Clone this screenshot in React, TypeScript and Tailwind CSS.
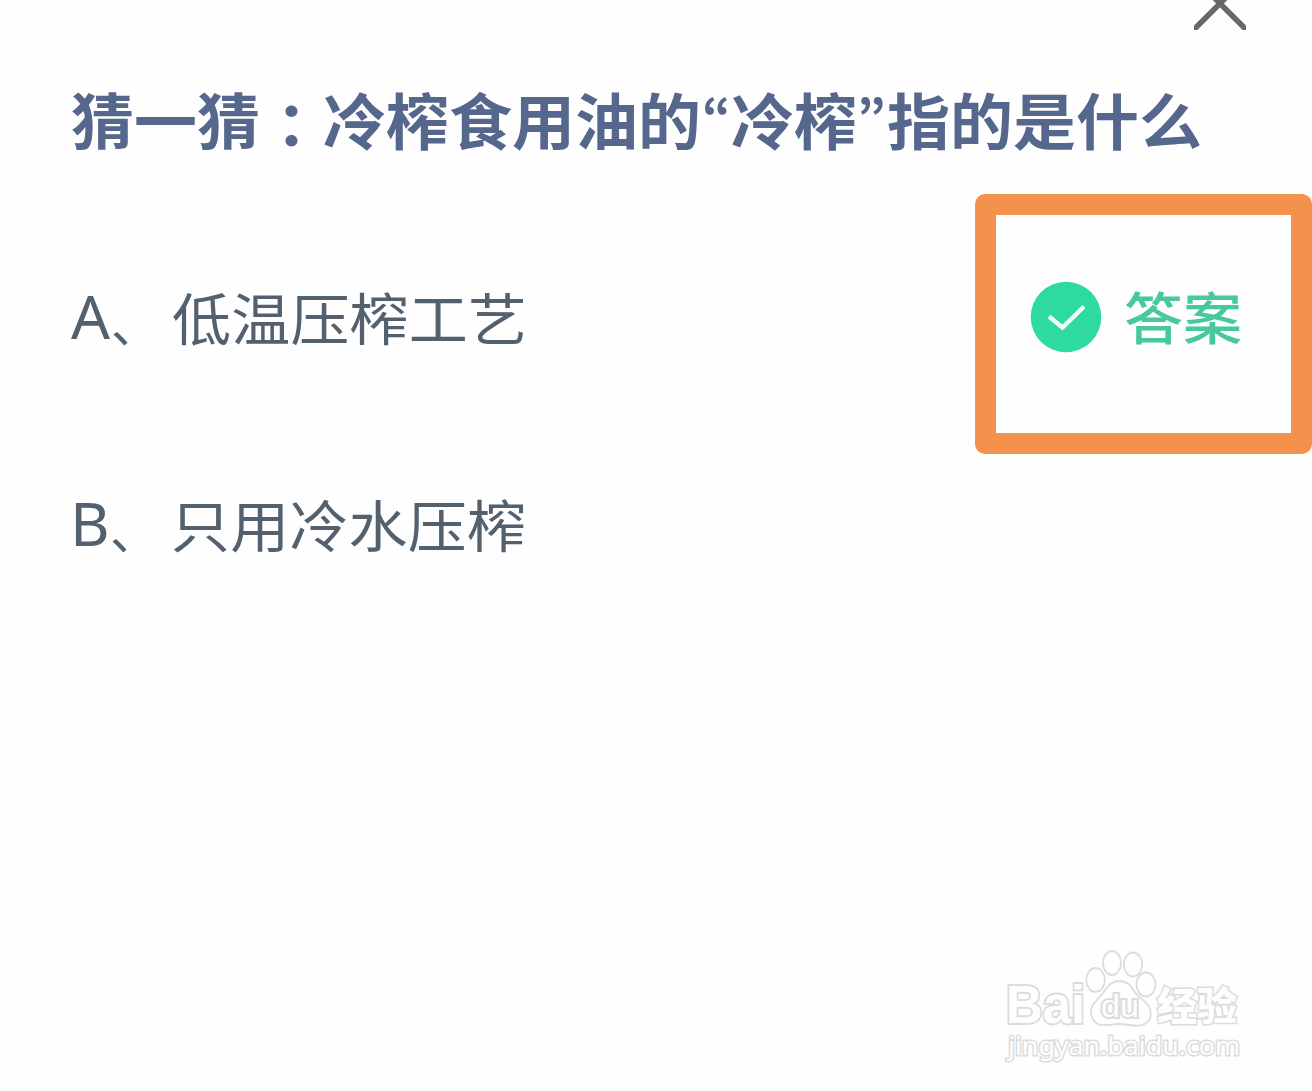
import React from "react";

const options = [
  { key: "A", text: "低温压榨工艺" },
  { key: "B", text: "只用冷水压榨" },
];

const Option = ({ letter, text }: { letter: string; text: string }) => (
  <div className="flex whitespace-nowrap font-['Noto_Sans_CJK_SC',sans-serif] text-[59px] leading-[80px] text-[#53616f]">
    <span className="mt-[1px] w-[39px] font-['Noto_Sans',sans-serif] text-[61px] leading-[80px]">{letter}</span>
    <span className="w-[62px] pl-[1px] text-[48px] leading-[92px]">、</span>
    <span className="h-[92px] scale-y-95 leading-[81px] tracking-[0.200px]">{text}</span>
  </div>
);

const CloseIcon = () => (
  <svg width="52" height="30" viewBox="0 0 52 30" fill="none" stroke="#686868" strokeWidth="5.500">
    <path d="M-1.500 31L54 -24.500M53.500 31L-2 -24.500" />
  </svg>
);

const CheckIcon = () => (
  <svg width="72" height="72" viewBox="0 0 72 72" fill="none">
    <circle cx="36" cy="36" r="35.300" fill="#2cdb9d" />
    <path d="M19 35.500L32.500 46.500L54 25.500" stroke="#effff8" strokeWidth="4.400" />
  </svg>
);

const Watermark = () => (
  <svg width="250" height="120" viewBox="0 0 250 120" fill="#fefefe" stroke="#dcdcdc" strokeWidth="1.800">
    <text x="6" y="72.500" textLength="79" lengthAdjust="spacingAndGlyphs" className="font-['Liberation_Sans',sans-serif] text-[53px] font-bold" paintOrder="stroke" strokeWidth="3.800">Bai</text>
    <ellipse cx="95.500" cy="30" rx="9.300" ry="12" />
    <ellipse cx="112" cy="13" rx="9" ry="12" />
    <ellipse cx="133" cy="14.500" rx="9.300" ry="12" />
    <ellipse cx="146" cy="34.500" rx="9.500" ry="12" />
    <path d="M120 31C111 31 107 37 103 43C99 49 90 54 91 63C92 72 98 76 105 75C112 75 115 74 120 74C126 74 134 77 142 75C149 73 152 67 150 59C148 51 139 49 134 41C130 35 127 31 120 31Z" />
    <text x="101" y="67" textLength="38" lengthAdjust="spacingAndGlyphs" className="font-['Liberation_Sans',sans-serif] text-[32px]" strokeWidth="4" paintOrder="stroke">du</text>
    <text x="157" y="70" textLength="80" lengthAdjust="spacingAndGlyphs" className="font-['Noto_Sans_CJK_SC',sans-serif] text-[39px] font-black" paintOrder="stroke" strokeWidth="3">经验</text>
    <text x="8" y="104.500" textLength="232" lengthAdjust="spacingAndGlyphs" className="font-['Noto_Sans',sans-serif] text-[26px]" paintOrder="stroke" strokeWidth="3">jingyan.baidu.com</text>
  </svg>
);

const App = () => {
  return (
    <div className="flex h-[1091px] w-[1312px] flex-col overflow-hidden bg-[#fefefe]">
      <header className="flex h-[30px] justify-end pr-[66px]">
        <CloseIcon />
      </header>

      <h1 className="mt-[45px] flex h-[88px] scale-y-[0.970] whitespace-nowrap pl-[71px] font-['Noto_Sans_CJK_SC',sans-serif] text-[63px] font-bold leading-[88px] text-[#56678d]">
        <span>猜一猜</span>
        <span className="mt-[4px] font-['Noto_Sans_CJK_TC',sans-serif]">：</span>
        <span>冷榨食用油的</span>
        <span className="mt-[-5px] w-[30px] pl-[1px] font-['Noto_Sans_CJK_KR',sans-serif] text-[50px]" lang="ko">“</span>
        <span>冷榨</span>
        <span className="mt-[-5px] w-[30px] font-['Noto_Sans_CJK_KR',sans-serif] text-[50px]" lang="ko">”</span>
        <span>指的是什么</span>
      </h1>

      <main className="mt-[31px]">
        <div className="flex h-[260px] justify-between pl-[71px]">
          <div className="pt-[81px]">
            <Option letter={options[0].key} text={options[0].text} />
          </div>
          <div className="flex w-[337px] rounded-[10px] bg-[#f2924c] p-[21px]">
            <div className="flex flex-1 bg-[#fefefe] pl-[34px]">
              <div className="mt-[66px] h-[72px]">
                <CheckIcon />
              </div>
              <span className="ml-[22px] mt-[60px] h-[80px] scale-y-95 whitespace-nowrap font-['Noto_Sans_CJK_SC',sans-serif] text-[59px] font-medium leading-[80px] text-[#48c99c]">答案</span>
            </div>
          </div>
        </div>
        <div className="mt-[28px] pl-[70px]">
          <Option letter={options[1].key} text={options[1].text} />
        </div>
      </main>

      <footer className="mt-auto flex h-[141px] justify-end pr-[62px]">
        <Watermark />
      </footer>
    </div>
  );
};

export default App;
